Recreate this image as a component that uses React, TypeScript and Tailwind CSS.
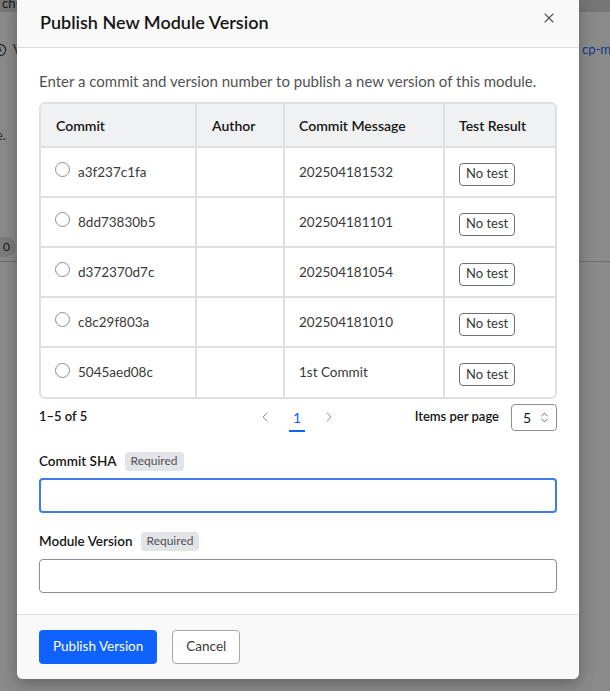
import React, { useState } from 'react';
import { X, ChevronLeft, ChevronRight, ChevronsUpDown } from 'lucide-react';

const commits = [
  { sha: 'a3f237c1fa', author: '', message: '202504181532', test: 'No test' },
  { sha: '8dd73830b5', author: '', message: '202504181101', test: 'No test' },
  { sha: 'd372370d7c', author: '', message: '202504181054', test: 'No test' },
  { sha: 'c8c29f803a', author: '', message: '202504181010', test: 'No test' },
  { sha: '5045aed08c', author: '', message: '1st Commit', test: 'No test' },
];

function RequiredTag() {
  return (
    <span className="ml-[8px] inline-flex h-[19px] items-center rounded-[4px] bg-[#e3e4e8] px-[6px] text-[12px] font-normal text-[#525252]">
      Required
    </span>
  );
}

export default function App() {
  const [selected, setSelected] = useState<string | null>(null);
  const [sha, setSha] = useState('');
  const [version, setVersion] = useState('');

  return (
    <div
      className="relative h-[691px] w-[610px] overflow-hidden bg-white text-[#161616]"
      style={{ fontFamily: 'Lato, "Noto Sans", Arial, sans-serif' }}
    >
      {/* page behind the dialog */}
      <div className="h-[12px] bg-[#d6d6d6] pl-[2px] text-[13px] leading-[6px] text-[#161616]">ch-</div>
      <div className="flex items-center justify-between pt-[28px] text-[13px]">
        <span className="flex items-center gap-[6px] text-[#393939]">
          <svg width="14" height="14" viewBox="0 0 16 16" className="-ml-[7px]">
            <circle cx="8" cy="8" r="6.5" fill="none" stroke="#393939" strokeWidth="1.3" />
            <path d="M8 4.5V8l2.2 1.6" fill="none" stroke="#393939" strokeWidth="1.3" />
          </svg>
          V
        </span>
        <span className="mr-[-1px] text-[#0f62fe]">cp-m</span>
      </div>
      <div className="mt-[66px] -ml-[4px] text-[13px] text-[#393939]">e.</div>
      <div className="mt-[92px] -ml-[8px] inline-flex h-[20px] w-[24px] items-center justify-end rounded-full bg-[#e0e0e0] pr-[6px] text-[12px]">0</div>
      <div className="mt-[4px] border-t border-[#c6c6c6]" />

      {/* overlay */}
      <div className="absolute inset-0 bg-[rgba(22,22,22,0.5)]" />

      {/* dialog */}
      <div className="absolute left-[17px] top-0 flex w-[562px] flex-col overflow-hidden rounded-b-[6px] bg-white shadow-[0_4px_16px_rgba(0,0,0,0.3)]">
        <div className="flex h-[48px] items-start justify-between border-b border-[#dcdde2] bg-[#f9f9f9] pl-[23px] pr-[22px]">
          <h2 className="pt-[9px] text-[18px] font-semibold leading-[26px] text-[#161616]">Publish New Module Version</h2>
          <button className="mt-[10px] text-[#525252]">
            <X size={16} strokeWidth={1.6} />
          </button>
        </div>

        <div className="px-[22px] pt-[23px]">
          <p className="text-[15px] leading-[20px] text-[#525252]">
            Enter a commit and version number to publish a new version of this module.
          </p>

          <div className="mt-[11px] overflow-hidden rounded-[6px] border-2 border-[#e0e0e3]">
            <table className="w-full border-collapse text-left">
              <thead>
                <tr className="h-[43px] bg-[#f0f1f3] text-[14px] font-semibold text-[#161616]">
                  <th className="w-[155px] border-r-2 border-[#e0e0e3] pl-[15px] font-semibold">Commit</th>
                  <th className="w-[88px] border-r-2 border-[#e0e0e3] pl-[15px] font-semibold">Author</th>
                  <th className="w-[160px] border-r-2 border-[#e0e0e3] pl-[14px] font-semibold">Commit Message</th>
                  <th className="pl-[14px] font-semibold">Test Result</th>
                </tr>
              </thead>
              <tbody>
                {commits.map((c) => (
                  <tr key={c.sha} className="h-[50px] border-t-2 border-[#e0e0e3] text-[13.5px] text-[#393939]">
                    <td className="border-r-2 border-[#e0e0e3] pl-[14px]">
                      <label className="flex cursor-pointer items-center gap-[8px]">
                        <span
                          onClick={() => { setSelected(c.sha); setSha(c.sha); }}
                          className={`-mt-[5px] block h-[15px] w-[15px] rounded-full border ${selected === c.sha ? 'border-[5px] border-[#0f62fe]' : 'border-[#8d8d8d]'}`}
                        />
                        {c.sha}
                      </label>
                    </td>
                    <td className="border-r-2 border-[#e0e0e3]">{c.author}</td>
                    <td className="border-r-2 border-[#e0e0e3] pl-[14px]">{c.message}</td>
                    <td className="pl-[14px] pt-[4px]">
                      <span className="inline-flex h-[23px] items-center rounded-[4px] border border-[#6f6f6f] px-[6px] text-[13px] text-[#393939]">
                        {c.test}
                      </span>
                    </td>
                  </tr>
                ))}
              </tbody>
            </table>
          </div>

          <div className="mt-[4px] flex h-[28px] items-center text-[13px]">
            <span className="w-[218px] font-semibold text-[#161616]">1–5 of 5</span>
            <div className="flex items-center">
              <ChevronLeft size={16} strokeWidth={1.4} className="text-[#8d8d8d]" />
              <span className="relative mx-[16px] flex h-[28px] w-[16px] items-center justify-center text-[14px] text-[#0f62fe]">
                1
                <span className="absolute bottom-[-1px] left-0 h-[2px] w-[16px] bg-[#0f62fe]" />
              </span>
              <ChevronRight size={16} strokeWidth={1.4} className="text-[#8d8d8d]" />
            </div>
            <span className="ml-auto font-semibold text-[#161616]">Items per page</span>
            <div className="ml-[12px] flex h-[27px] w-[46px] items-center justify-between rounded-[4px] border border-[#8d8d99] pl-[11px] pr-[5px] text-[14px] text-[#161616]">
              5
              <ChevronsUpDown size={13} strokeWidth={1.6} className="text-[#525252]" />
            </div>
          </div>

          <label className="mt-[20px] flex items-center text-[13.5px] font-semibold text-[#161616]">
            Commit SHA
            <RequiredTag />
          </label>
          <input
            value={sha}
            onChange={(e) => setSha(e.target.value)}
            autoFocus
            className="mt-[7px] block h-[35px] w-full rounded-[4px] border-2 border-[#3d7be8] px-[8px] text-[14px] outline-none"
          />

          <label className="mt-[18px] flex items-center text-[13.5px] font-semibold text-[#161616]">
            Module Version
            <RequiredTag />
          </label>
          <input
            value={version}
            onChange={(e) => setVersion(e.target.value)}
            className="mt-[7px] mb-[21px] block h-[34px] w-full rounded-[4px] border border-[#8d8d99] px-[8px] text-[14px] outline-none"
          />
        </div>

        <div className="flex gap-[15px] border-t border-[#e0e0e3] bg-[#f9f9f9] px-[22px] pt-[15px] pb-[15px]">
          <button className="h-[34px] rounded-[4px] bg-[#0f62fe] px-[14px] text-[13.5px] text-white">Publish Version</button>
          <button className="h-[34px] rounded-[4px] border border-[#a8a8a8] bg-white px-[13px] text-[13.5px] text-[#393939]">Cancel</button>
        </div>
      </div>
    </div>
  );
}
